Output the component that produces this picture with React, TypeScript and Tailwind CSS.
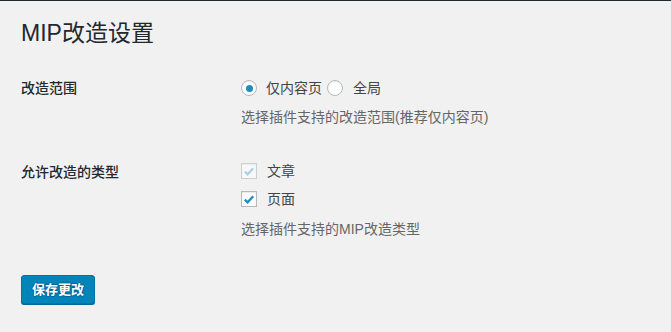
import React from 'react';

const font = { fontFamily: '"Liberation Sans", "Noto Sans CJK SC", sans-serif' };

const Radio: React.FC<{ checked?: boolean }> = ({ checked }) => (
    <span className="w-4 h-4 rounded-full border border-[#b4b9be] bg-white shadow-[inset_0_1px_2px_rgba(0,0,0,0.07)] flex items-center justify-center shrink-0">
        {checked && <span className="w-[7px] h-[7px] rounded-full bg-[#1e8cbe]" />}
    </span>
);

const Checkbox: React.FC<{ disabled?: boolean }> = ({ disabled }) => (
    <span className={`w-4 h-4 border border-[#b4b9be] bg-white shadow-[inset_0_1px_2px_rgba(0,0,0,0.1)] flex items-center justify-center shrink-0 ${disabled ? 'opacity-60 bg-[#fbfbfb]' : ''}`}>
        <svg viewBox="0 0 16 16" className="w-[15px] h-[15px]">
            <path d="M3.2 8.2 L6.4 11.3 L12.8 4.3" fill="none" stroke={disabled ? '#7fbde0' : '#1e8cbe'} strokeWidth="2.6" strokeLinecap="butt" strokeLinejoin="miter" />
        </svg>
    </span>
);

export default function App() {
    return (
        <div className="min-h-screen bg-[#f1f1f1] border-t border-[#23282d] pl-[21px]" style={font}>
            <h1 className="mt-[17px] text-[23px] leading-[30px] font-normal text-[#23282d]">MIP改造设置</h1>

            <div className="grid grid-cols-[220px_1fr] mt-[30px]">
                <div className="text-sm leading-5 font-medium text-[#23282d]">改造范围</div>
                <div>
                    <div className="flex items-center h-5 text-sm text-[#444]">
                        <Radio checked />
                        <span className="ml-[9px]">仅内容页</span>
                        <span className="ml-[5px]"><Radio /></span>
                        <span className="ml-[10px]">全局</span>
                    </div>
                    <p className="mt-[9px] text-sm leading-5 text-[#666]">选择插件支持的改造范围(推荐仅内容页)</p>
                </div>
            </div>

            <div className="grid grid-cols-[220px_1fr] mt-[34px]">
                <div className="text-sm leading-5 font-medium text-[#23282d] pt-[1px]">允许改造的类型</div>
                <div>
                    <div className="flex items-center h-5 text-sm text-[#444]">
                        <Checkbox disabled />
                        <span className="ml-[10px]">文章</span>
                    </div>
                    <div className="flex items-center h-5 mt-2 text-sm text-[#444]">
                        <Checkbox />
                        <span className="ml-[10px]">页面</span>
                    </div>
                    <p className="mt-[10px] text-sm leading-5 text-[#666]">选择插件支持的MIP改造类型</p>
                </div>
            </div>

            <button className="mt-[36px] h-[29px] px-[10px] rounded-[3px] bg-[#0085ba] border border-[#0073aa] shadow-[0_1px_0_#006799] text-white text-[13px] font-semibold [text-shadow:0_-1px_1px_#006799,1px_0_1px_#006799,0_1px_1px_#006799,-1px_0_1px_#006799]">
                保存更改
            </button>
        </div>
    );
}
